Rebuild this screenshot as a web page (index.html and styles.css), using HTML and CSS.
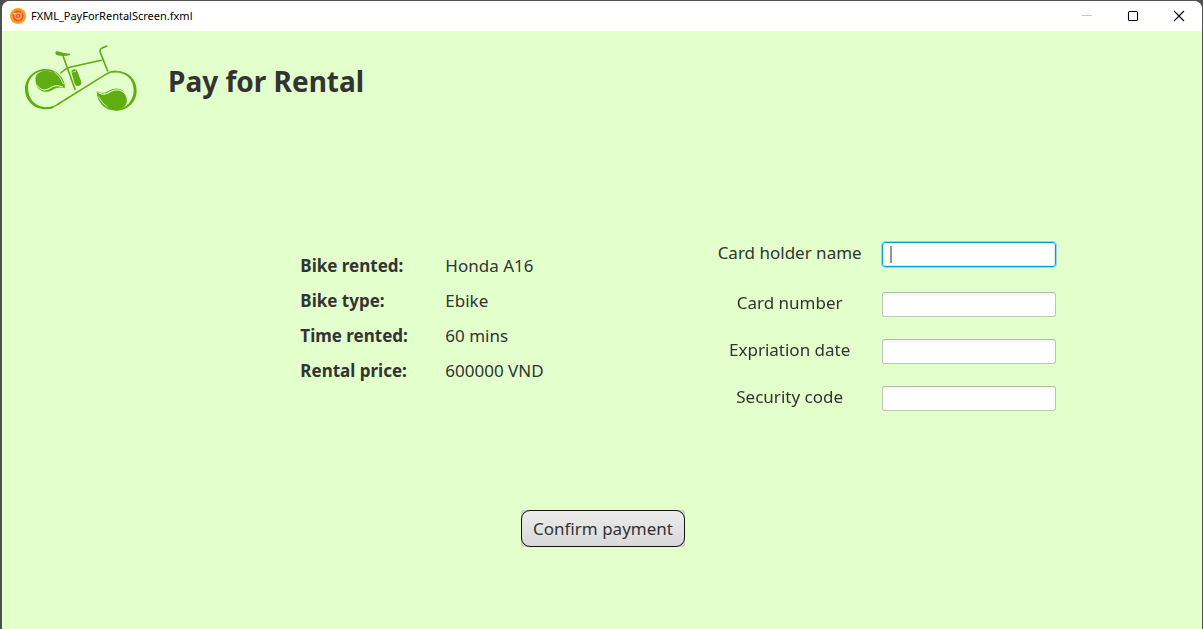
FILE: index.html
```html
<!DOCTYPE html>
<html lang="en">
<head>
<meta charset="utf-8">
<meta name="viewport" content="width=device-width, initial-scale=1">
<title>FXML_PayForRentalScreen.fxml</title>
<link rel="stylesheet" href="styles.css">
</head>
<body>
<div class="window">
  <div class="titlebar">
    <svg class="app-icon" viewBox="0 0 16 16" aria-hidden="true">
      <circle cx="8" cy="8" r="8" fill="#fba01c"/>
      <circle cx="8" cy="8" r="5.7" fill="#f4601c"/>
      <path d="M3.6 5 L6.2 5.8 C8 4.4 10.8 5.2 11.2 7.6 C11.5 9.8 9.8 11.2 7.8 11 C6 10.8 4.8 9 5.3 7.2 L3.6 5 M10.5 5.6 L12 4.5" fill="none" stroke="#ffd9c0" stroke-width="1"/>
      <path d="M6.8 7.2 L9.2 7.6 L8.4 9.2 Z" fill="#ffb08a"/>
    </svg>
    <span class="window-name">FXML_PayForRentalScreen.fxml</span>
    <div class="controls">
      <button type="button" class="control" aria-label="Minimize" disabled>
        <svg viewBox="0 0 12 12" aria-hidden="true"><path d="M1 5.5 H11" stroke="#c4c4c4"/></svg>
      </button>
      <button type="button" class="control" aria-label="Maximize">
        <svg viewBox="0 0 12 12" aria-hidden="true"><rect x="1.5" y="1.5" width="9" height="9" rx="1" fill="none" stroke="#000" stroke-width="1.1"/></svg>
      </button>
      <button type="button" class="control" aria-label="Close">
        <svg viewBox="0 0 12 12" aria-hidden="true"><path d="M1 1 L11 11 M11 1 L1 11" stroke="#000" stroke-width="1.1"/></svg>
      </button>
    </div>
  </div>

  <header class="header">
    <svg class="logo" viewBox="29 20 336 198" role="img" aria-label="Eco bike">
      <g fill="none" stroke="#60ad12" stroke-linecap="round">
        <path d="M274 23 L259 30 Q252 34 255 43 L277 98" stroke-width="5"/>
        <path d="M143 52 L179 153" stroke-width="5"/>
        <path d="M136 104 L157 88 L258 66" stroke-width="4.5"/>
        <path d="M95 209 C108 209 115 206 124 200 L270 109 C284 100 292 99 303 99" stroke-width="4.5"/>
      </g>
      <g fill="#60ad12">
        <path d="M120 43 Q120 38 127 39 Q144 46 165 46 L163 51 Q144 55 126 51 Q120 49 120 43 Z"/>
        <path d="M168 101 Q169 93 178 93 Q185 94 187 101 L198 131 Q199 140 191 142 Q181 145 178 136 Z"/>
        <path d="M150 150 C147 113 120 92 90 92 C55 92 29 120 29 153 C29 187 56 213 90 213 C99 213 108 212 116 208 L112 204 C70 216 38 187 38 149 C38 118 62 97 90 97 C119 97 139 119 150 150 Z"/>
        <path d="M61 115 C59 137 65 152 84 154 C104 155 112 134 149 150 C143 118 120 98 92 97 C76 97 65 104 61 115 Z"/>
        <path d="M61 132 C68 158 90 160 105 150 C119 141 134 141 149 150 C134 145 123 147 111 155 C92 166 66 162 61 132 Z"/>
        <path d="M292 99 C333 93 364 119 364 157 C364 191 336 217 302 217 C268 217 245 193 244 158 C258 193 276 212 301 212 C332 213 355 187 355 156 C355 120 328 99 292 103 Z"/>
        <path d="M245 160 C257 170 268 171 283 164 C306 149 331 158 334 181 C337 199 326 212 301 213 C272 212 251 193 245 160 Z"/>
        <path d="M244 158 C256 165 268 165 280 158 C303 143 327 152 333 176 C323 156 305 152 284 162 C270 171 255 169 244 158 Z"/>
      </g>
      <g fill="none" stroke="#e2ffcc" stroke-linecap="round">
        <path d="M64 140 C76 158 92 158 106 148 C118 140 130 141 142 146" stroke-width="3"/>
        <path d="M118 101 Q136 114 144 136" stroke-width="2.5"/>
        <path d="M250 163 C261 169 271 168 282 161 C302 149 322 154 331 170" stroke-width="3"/>
        <path d="M250 176 Q259 195 276 206" stroke-width="2.5"/>
        <path d="M172 102 Q174 97 181 99" stroke-width="2"/>
      </g>
    </svg>
    <h1 class="heading">Pay for Rental</h1>
  </header>

  <form class="payment">
    <div class="details">
      <dl class="summary">
        <dt>Bike rented:</dt><dd>Honda A16</dd>
        <dt>Bike type:</dt><dd>Ebike</dd>
        <dt>Time rented:</dt><dd>60 mins</dd>
        <dt>Rental price:</dt><dd>600000 VND</dd>
      </dl>
      <div class="card">
        <label for="holder">Card holder name</label>
        <input class="field" id="holder" type="text" autofocus>
        <label for="number">Card number</label>
        <input class="field" id="number" type="text">
        <label for="expiry">Expriation date</label>
        <input class="field" id="expiry" type="text">
        <label for="code">Security code</label>
        <input class="field" id="code" type="text">
      </div>
    </div>
    <div class="actions">
      <div class="confirm-frame">
        <button type="button" class="confirm">Confirm payment</button>
      </div>
    </div>
  </form>
</div>
</body>
</html>
```
FILE: styles.css
```css
* {
  box-sizing: border-box;
}

body {
  margin: 0;
  padding: 1px 1px 0 2px;
  background: #505050;
  color: #333;
  font-family: "Noto Sans", "Open Sans", sans-serif;
  font-size: 17px;
  line-height: 24px;
}

.window {
  min-height: calc(100vh - 1px);
  border-radius: 8px 8px 0 0;
  background: #e2ffcc;
  overflow: hidden;
}

.titlebar {
  display: flex;
  align-items: center;
  height: 30px;
  padding-left: 8px;
  background: #fff;
  color: #000;
}

.app-icon {
  width: 16px;
  height: 16px;
  margin-right: 5px;
}

.window-name {
  font-size: 11px;
}

.controls {
  display: flex;
  margin-left: auto;
}

.control {
  display: grid;
  place-items: center;
  width: 46px;
  height: 30px;
  padding: 0;
  border: 0;
  background: none;
}

.control svg {
  width: 12px;
  height: 12px;
}

.header {
  display: flex;
  align-items: center;
  gap: 31px;
  padding: 14px 23px 0;
}

.logo {
  width: 112px;
  height: 66px;
}

.heading {
  margin: 0;
  padding-top: 6px;
  font-size: 28px;
  line-height: 40px;
}

.payment {
  padding-top: 117px;
}

.details {
  display: flex;
  justify-content: center;
  gap: 174px;
  padding-left: 152px;
}

.summary {
  display: grid;
  grid-template-columns: 145px auto;
  grid-auto-rows: 35px;
  align-items: center;
  margin: 20px 0 0;
}

.summary dt {
  font-weight: 700;
}

.summary dd {
  margin: 0;
}

.card {
  display: grid;
  grid-template-columns: auto 174px;
  grid-template-rows: 52px 48px 46px 48px;
  column-gap: 20px;
  align-items: center;
  text-align: center;
}

.card label {
  padding-bottom: 2px;
}

.field {
  width: 100%;
  height: 25px;
  padding: 0 7px;
  border: 1px solid #c0c4bc;
  border-top-color: #b4b8b0;
  border-radius: 3px;
  background: linear-gradient(#f2f2f2, #fff 4px);
  font: inherit;
  font-size: 14px;
  color: #333;
}

.field:focus {
  border-color: #039ed3;
  outline: 1px solid #8fdcd9;
  outline-offset: 0;
  box-shadow: inset 0 0 0 1px #d5eef8;
}

/* Two-pixel grey caret of the empty focused field */
.field:placeholder-shown:focus,
#holder:focus {
  background: linear-gradient(#969696, #969696) 7px center / 2px 17px no-repeat, #fff;
  caret-color: transparent;
}

.actions {
  display: flex;
  justify-content: center;
  padding: 88px 0 0 2px;
}

.confirm-frame {
  border-radius: 3px;
  background: #c9cfc4;
}

.confirm {
  display: block;
  height: 37px;
  padding: 0 11px;
  border: 1px solid #111;
  border-radius: 9px;
  background: linear-gradient(#ececec, #d9d9d9);
  color: #333;
  font: inherit;
}
```
